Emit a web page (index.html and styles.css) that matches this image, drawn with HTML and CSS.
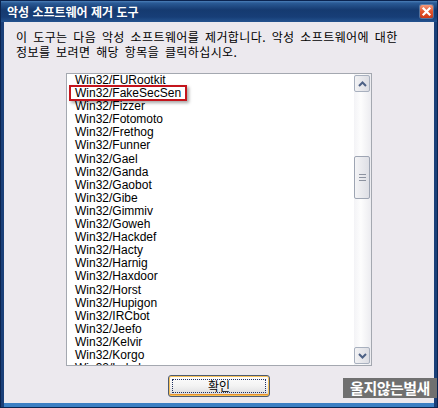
FILE: index.html
```html
<!DOCTYPE html>
<html lang="ko">
<head>
<meta charset="utf-8">
<title>악성 소프트웨어 제거 도구</title>
<link rel="stylesheet" href="styles.css">
</head>
<body>
<div class="window">
  <div class="titlebar">
    <span class="title">악성 소프트웨어 제거 도구</span>
    <span class="close"><svg width="13" height="13" viewBox="0 0 13 13"><path d="M3.5 3.5 L9.5 9.5 M9.5 3.5 L3.5 9.5" stroke="#fff" stroke-width="2.2" stroke-linecap="square"/></svg></span>
  </div>
  <div class="body">
    <p class="desc">이 도구는 다음 악성 소프트웨어를 제거합니다. 악성 소프트웨어에 대한<br>정보를 보려면 해당 항목을 클릭하십시오.</p>
    <div class="listbox">
      <ul class="items">
        <li>Win32/FURootkit</li>
        <li>Win32/FakeSecSen</li>
        <li>Win32/Fizzer</li>
        <li>Win32/Fotomoto</li>
        <li>Win32/Frethog</li>
        <li>Win32/Funner</li>
        <li>Win32/Gael</li>
        <li>Win32/Ganda</li>
        <li>Win32/Gaobot</li>
        <li>Win32/Gibe</li>
        <li>Win32/Gimmiv</li>
        <li>Win32/Goweh</li>
        <li>Win32/Hackdef</li>
        <li>Win32/Hacty</li>
        <li>Win32/Harnig</li>
        <li>Win32/Haxdoor</li>
        <li>Win32/Horst</li>
        <li>Win32/Hupigon</li>
        <li>Win32/IRCbot</li>
        <li>Win32/Jeefo</li>
        <li>Win32/Kelvir</li>
        <li>Win32/Korgo</li>
        <li>Win32/Lolyda</li>
      </ul>
      <div class="scrollbar">
        <span class="sbtn"><svg width="9" height="6" viewBox="0 0 9 6"><path d="M1 5 L4.5 1.5 L8 5" fill="none" stroke="#4D6185" stroke-width="2"/></svg></span>
        <div class="track">
          <span class="thumb"><span class="grip"></span></span>
        </div>
        <span class="sbtn"><svg width="9" height="6" viewBox="0 0 9 6"><path d="M1 1 L4.5 4.5 L8 1" fill="none" stroke="#4D6185" stroke-width="2"/></svg></span>
      </div>
      <span class="mark"></span>
    </div>
    <button class="ok"><span class="focus">확인</span></button>
  </div>
  <span class="watermark">울지않는벌새</span>
</div>
</body>
</html>
```
FILE: styles.css
```css
* { box-sizing: border-box; }
html, body { margin: 0; padding: 0; }
body {
  width: 438px;
  height: 408px;
  overflow: hidden;
  font-family: "Noto Sans CJK KR", "Liberation Sans", sans-serif;
  font-size: 12px;
  color: #000;
}
.window {
  position: relative;
  width: 438px;
  height: 408px;
  display: flex;
  flex-direction: column;
  background: #1a3f78;
  border: 1px solid #0b2450;
}
.titlebar {
  height: 21px;
  display: flex;
  align-items: center;
  justify-content: space-between;
  padding: 0 4px 0 6px;
  background: linear-gradient(#4b7fb8 0, #2a5a96 2px, #153a70 9px, #173e77 16px, #24538f 21px);
}
.title {
  color: #fff;
  font-weight: bold;
  font-size: 12px;
  line-height: 14px;
}
.close {
  width: 13px;
  height: 13px;
  display: flex;
  border-radius: 2px;
  background: linear-gradient(#f59a7c, #e2542c 50%, #d03a17);
  box-shadow: 0 0 0 1px #fff4;
}
.body {
  flex: 1;
  margin: 0 3px;
  border-bottom: 4px solid #3c80c4;
  background: #ece9ee;
  display: flex;
  flex-direction: column;
  align-items: center;
  padding-top: 7px;
}
.desc {
  margin: 0;
  align-self: stretch;
  padding-left: 12px;
  line-height: 15px;
  font-size: 12px;
  letter-spacing: 0.4px;
  word-spacing: 2px;
}
.listbox {
  position: relative;
  margin-top: 14px;
  width: 306px;
  height: 293px;
  border: 1px solid #a4a8b0;
  background: #fff;
  display: flex;
}
.items {
  flex: 1;
  margin: 0;
  padding: 0 0 0 8px;
  list-style: none;
  overflow: hidden;
  font-family: "Liberation Sans", sans-serif;
  font-size: 12px;
  line-height: 13.1px;
}
.scrollbar {
  width: 17px;
  padding: 1px 1px 1px 0;
  display: flex;
  flex-direction: column;
  background: linear-gradient(90deg, #f3f3f6, #fdfdfd 40%, #ececf0);
}
.sbtn {
  height: 17px;
  display: flex;
  align-items: center;
  justify-content: center;
  border: 1px solid #a8b0be;
  border-radius: 2px;
  background: linear-gradient(90deg, #f2f2f4, #dcdde3);
}
.track {
  flex: 1;
  padding-top: 64px;
}
.thumb {
  display: flex;
  align-items: center;
  justify-content: center;
  height: 43px;
  border: 1px solid #9ea5b3;
  border-radius: 2px;
  background: linear-gradient(90deg, #f4f4f6, #dedfe5);
}
.grip {
  width: 7px;
  height: 7px;
  background: repeating-linear-gradient(#8d93a0 0 1px, transparent 1px 3px);
}
.mark {
  position: absolute;
  left: 2px;
  top: 11px;
  width: 118px;
  height: 16px;
  border: 2px solid #c4141c;
  box-shadow: 2px 2px 3px rgba(0,0,0,0.35);
}
.ok {
  margin-top: 9px;
  width: 102px;
  height: 22px;
  padding: 3px;
  border: 1px solid #4c5a70;
  border-radius: 3px;
  background: linear-gradient(#fefefe, #f3f3f3 50%, #d9d9dc);
  box-shadow: inset 0 0 0 1px #f7c25b, inset 0 -2px 0 0 #e8912d;
  font-family: "Noto Sans CJK KR", sans-serif;
  font-size: 12px;
  color: #000;
  display: flex;
}
.focus {
  flex: 1;
  display: flex;
  align-items: center;
  justify-content: center;
  border: 1px dotted #203060;
  line-height: 12px;
}
.watermark {
  position: absolute;
  right: 0;
  top: 377px;
  width: 94px;
  height: 20px;
  background: #707070;
  color: #fff;
  font-weight: bold;
  font-size: 15px;
  line-height: 20px;
  text-align: center;
  letter-spacing: -0.5px;
}
```
